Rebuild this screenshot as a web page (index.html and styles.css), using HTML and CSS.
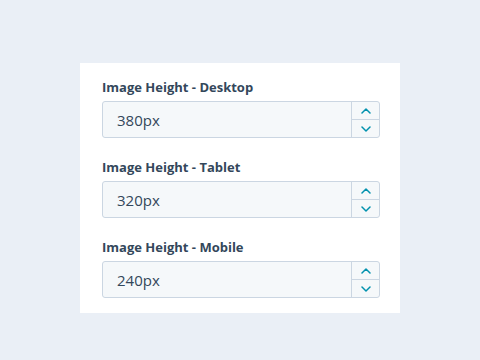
FILE: index.html
```html
<!DOCTYPE html>
<html>
<head>
<meta charset="utf-8">
<link rel="stylesheet" href="styles.css">
</head>
<body>
<div class="card">
  <div class="field">
    <label class="label">Image Height - Desktop</label>
    <div class="input">
      <span class="value">380px</span>
      <div class="stepper">
        <span class="step"><svg width="10" height="6" viewBox="0 0 10 6"><path d="M1 5 L5 1 L9 5" fill="none" stroke="#0091ae" stroke-width="1.5" stroke-linecap="round" stroke-linejoin="round"/></svg></span>
        <span class="step"><svg width="10" height="6" viewBox="0 0 10 6"><path d="M1 1 L5 5 L9 1" fill="none" stroke="#0091ae" stroke-width="1.5" stroke-linecap="round" stroke-linejoin="round"/></svg></span>
      </div>
    </div>
  </div>
  <div class="field">
    <label class="label">Image Height - Tablet</label>
    <div class="input">
      <span class="value">320px</span>
      <div class="stepper">
        <span class="step"><svg width="10" height="6" viewBox="0 0 10 6"><path d="M1 5 L5 1 L9 5" fill="none" stroke="#0091ae" stroke-width="1.5" stroke-linecap="round" stroke-linejoin="round"/></svg></span>
        <span class="step"><svg width="10" height="6" viewBox="0 0 10 6"><path d="M1 1 L5 5 L9 1" fill="none" stroke="#0091ae" stroke-width="1.5" stroke-linecap="round" stroke-linejoin="round"/></svg></span>
      </div>
    </div>
  </div>
  <div class="field">
    <label class="label">Image Height - Mobile</label>
    <div class="input">
      <span class="value">240px</span>
      <div class="stepper">
        <span class="step"><svg width="10" height="6" viewBox="0 0 10 6"><path d="M1 5 L5 1 L9 5" fill="none" stroke="#0091ae" stroke-width="1.5" stroke-linecap="round" stroke-linejoin="round"/></svg></span>
        <span class="step"><svg width="10" height="6" viewBox="0 0 10 6"><path d="M1 1 L5 5 L9 1" fill="none" stroke="#0091ae" stroke-width="1.5" stroke-linecap="round" stroke-linejoin="round"/></svg></span>
      </div>
    </div>
  </div>
</div>
</body>
</html>
```

FILE: styles.css
```css
html, body {
  margin: 0;
  padding: 0;
}
body {
  background: #eaeff6;
  width: 480px;
  height: 360px;
  font-family: "Open Sans", "Noto Sans", sans-serif;
  color: #33475b;
}
.card {
  box-sizing: border-box;
  width: 320px;
  margin: 63px 0 0 80px;
  background: #ffffff;
  padding: 15px 20px 15px 22px;
  display: flex;
  flex-direction: column;
  gap: 20px;
}
.field {
  display: flex;
  flex-direction: column;
  gap: 5px;
}
.label {
  font-size: 13px;
  font-weight: 700;
  line-height: 18px;
  color: #33475b;
}
.input {
  box-sizing: border-box;
  height: 37px;
  border: 1px solid #cbd6e2;
  border-radius: 3px;
  background: #f5f8fa;
  display: flex;
  align-items: stretch;
}
.value {
  flex: 1;
  display: flex;
  align-items: center;
  padding-left: 14px;
  font-size: 15px;
  color: #33475b;
}
.stepper {
  width: 27px;
  border-left: 1px solid #cbd6e2;
  display: flex;
  flex-direction: column;
}
.step {
  flex: 1;
  display: flex;
  align-items: center;
  justify-content: center;
}
.step + .step {
  border-top: 1px solid #cbd6e2;
}
```
